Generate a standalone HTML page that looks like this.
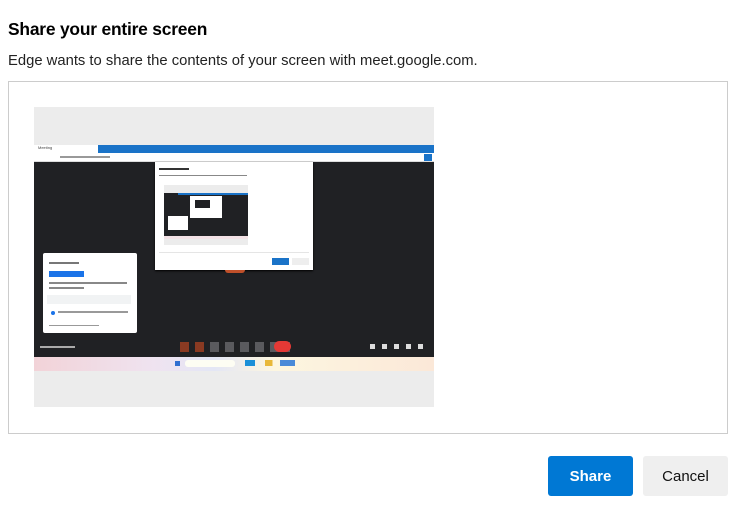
<!DOCTYPE html>
<html><head><meta charset="utf-8"><style>
*{margin:0;padding:0;box-sizing:border-box}
body{width:743px;height:506px;background:#fff;font-family:"Liberation Sans",sans-serif;position:relative;overflow:hidden;color:#000}
.a{position:absolute}
h1{position:absolute;left:8px;top:19px;font-size:17.4px;font-weight:bold;letter-spacing:-0.2px}
p.s{position:absolute;left:8px;top:53px;font-size:14.8px;color:#222}
.btn{position:absolute;top:456px;height:40px;width:85px;border-radius:3px;font-size:15px;display:flex;align-items:center;justify-content:center}
</style></head><body>
<h1>Share your entire screen</h1>
<p class="s">Edge wants to share the contents of your screen with meet.google.com.</p>
<div class="a" style="left:8px;top:81px;width:720px;height:353px;border:1px solid #ccc"></div>
<div class="a" style="left:34px;top:107px;width:400px;height:300px;background:#ececec"></div>
<div class="a" style="left:34px;top:145px;width:400px;height:8px;background:#1a73c8"></div>
<div class="a" style="left:34px;top:145px;width:64px;height:8px;background:#fff;font-size:4px;color:#444;padding-left:4px">Meeting</div>
<div class="a" style="left:34px;top:153px;width:400px;height:9px;background:#fff;border-bottom:1px solid #ddd"></div>
<div class="a" style="left:60px;top:156px;width:50px;height:2px;background:#999"></div>
<div class="a" style="left:424px;top:154px;width:8px;height:7px;background:#1a73c8"></div>
<div class="a" style="left:34px;top:162px;width:400px;height:195px;background:#202124"></div>
<div class="a" style="left:34px;top:357px;width:400px;height:14px;background:linear-gradient(90deg,#f2d3d8,#efe3f0 30%,#e3e6f5 45%,#fdf6e0 60%,#fbe8d8 100%)"></div>
<div class="a" style="left:175px;top:361px;width:5px;height:5px;background:#2f6fd0"></div>
<div class="a" style="left:185px;top:360px;width:50px;height:7px;background:#fdfdf3;border-radius:3px"></div>
<div class="a" style="left:245px;top:360px;width:50px;height:6px;background:linear-gradient(90deg,#1a8fd8 20%,transparent 20%,transparent 40%,#e8b83a 40%,#e8b83a 55%,transparent 55%,transparent 70%,#4a8ad8 70%)"></div>
<div class="a" style="left:180px;top:342px;width:110px;height:10px;background:repeating-linear-gradient(90deg,#5a5a5e 0 9px,transparent 9px 15px)"></div>
<div class="a" style="left:180px;top:342px;width:24px;height:10px;background:repeating-linear-gradient(90deg,#8a3a22 0 9px,transparent 9px 15px)"></div>
<div class="a" style="left:274px;top:341px;width:17px;height:11px;background:#e53935;border-radius:6px"></div>
<div class="a" style="left:40px;top:346px;width:35px;height:2px;background:#aaa"></div>
<div class="a" style="left:370px;top:344px;width:60px;height:5px;background:repeating-linear-gradient(90deg,#ddd 0 5px,transparent 5px 12px)"></div>
<div class="a" style="left:43px;top:253px;width:94px;height:80px;background:#fff;border-radius:2px"></div>
<div class="a" style="left:49px;top:262px;width:30px;height:2px;background:#777"></div>
<div class="a" style="left:49px;top:271px;width:35px;height:6px;background:#1a73e8"></div>
<div class="a" style="left:49px;top:282px;width:78px;height:2px;background:#888"></div>
<div class="a" style="left:49px;top:287px;width:35px;height:2px;background:#888"></div>
<div class="a" style="left:47px;top:295px;width:84px;height:9px;background:#f1f3f4"></div>
<div class="a" style="left:51px;top:311px;width:4px;height:4px;background:#1a73e8;border-radius:50%"></div>
<div class="a" style="left:58px;top:311px;width:70px;height:2px;background:#999"></div>
<div class="a" style="left:49px;top:325px;width:50px;height:1px;background:#999"></div>
<div class="a" style="left:155px;top:162px;width:158px;height:108px;background:#fff;box-shadow:0 1px 2px #000"></div>
<div class="a" style="left:159px;top:168px;width:30px;height:2px;background:#333"></div>
<div class="a" style="left:159px;top:175px;width:88px;height:1px;background:#888"></div>
<div class="a" style="left:164px;top:185px;width:84px;height:60px;background:#ececec"></div>
<div class="a" style="left:164px;top:193px;width:84px;height:43px;background:#202124"></div>
<div class="a" style="left:178px;top:193px;width:70px;height:2px;background:#1a73c8"></div>
<div class="a" style="left:190px;top:196px;width:32px;height:22px;background:#fff"></div>
<div class="a" style="left:195px;top:200px;width:15px;height:8px;background:#202124"></div>
<div class="a" style="left:168px;top:216px;width:20px;height:14px;background:#fff"></div>
<div class="a" style="left:164px;top:236px;width:84px;height:3px;background:#f3e2e6"></div>
<div class="a" style="left:159px;top:252px;width:150px;height:1px;background:#e5e5e5"></div>
<div class="a" style="left:272px;top:258px;width:17px;height:7px;background:#1a73c8"></div>
<div class="a" style="left:292px;top:258px;width:17px;height:7px;background:#eee"></div>
<div class="a" style="left:225px;top:270px;width:20px;height:3px;background:#c0502a;border-radius:0 0 8px 8px"></div>
<div class="btn" style="left:548px;background:#0078d4;color:#fff;font-weight:bold">Share</div>
<div class="btn" style="left:643px;background:#efefef;color:#111">Cancel</div>
</body></html>
